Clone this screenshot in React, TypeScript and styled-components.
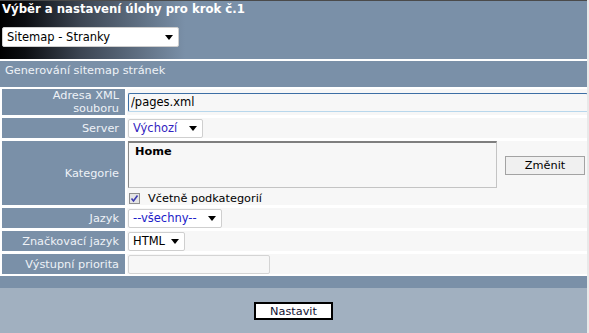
import React from 'react';
import styled, { createGlobalStyle } from 'styled-components';

const GlobalStyle = createGlobalStyle`
    html, body {
        margin: 0;
        padding: 0;
        background: #e9e9e9;
    }
    body {
        font-family: "DejaVu Sans", Verdana, sans-serif;
        font-size: 11px;
    }
`;

const Page = styled.div`
    width: 587px;
    height: 333px;
    background: #ffffff;
    display: flex;
    flex-direction: column;
    overflow: hidden;
`;

const Header = styled.div`
    border-top: 1px solid #4a4a4a;
    background: linear-gradient(to right, #000000 0px, #0c0e12 25px, #3c4552 80px, #7a90a8 185px, #7a90a8 100%);
    padding: 1px 2px 0;
    box-sizing: border-box;
    height: 59px;
`;

const Title = styled.div`
    color: #ffffff;
    font-weight: bold;
    font-size: 11.7px;
    line-height: 14px;
`;

const SelectWrap = styled.span<{ width: number }>`
    position: relative;
    display: inline-block;
    width: ${({ width }) => width}px;

    // arrow of the select
    &::after {
        content: '';
        position: absolute;
        right: 6px;
        top: 50%;
        margin-top: -2px;
        border-left: 4px solid transparent;
        border-right: 4px solid transparent;
        border-top: 5px solid #000;
        pointer-events: none;
    }
`;

const Select = styled.select<{ tone?: string; h?: number }>`
    appearance: none;
    width: 100%;
    height: ${({ h }) => h || 19}px;
    box-sizing: border-box;
    border: 1px solid #cfcfcf;
    border-radius: 2px;
    background: #ffffff;
    color: ${({ tone }) => tone || '#000'};
    font-family: "DejaVu Sans", Verdana, sans-serif;
    font-size: 11.5px;
    padding: 0 0 0 4px;
    margin: 0;
    outline: none;
`;

const HeaderSelect = styled(SelectWrap)`
    margin-top: 11px;
`;

const Section = styled.div`
    margin-top: 2px;
    height: 26px;
    background: #7a90a8;
    color: #eef2f7;
    padding: 3px 5px;
    box-sizing: border-box;
    font-size: 11.3px;
`;

const FormTable = styled.table`
    border-collapse: separate;
    border-spacing: 2px 3px;
    table-layout: fixed;
    width: 589px;
    margin-top: -1px;
`;

const Label = styled.td`
    width: 123px;
    box-sizing: border-box;
    background: #7a90a8;
    color: #eef2f7;
    text-align: right;
    padding: 0 6px 0 0;
    line-height: 13px;
    font-size: 11.3px;
    vertical-align: middle;
`;

const Value = styled.td<{ h: number }>`
    background: #f7f7f7;
    height: ${({ h }) => h}px;
    padding: 0 0 0 1px;
    vertical-align: middle;
    overflow: visible;
    white-space: nowrap;
`;

const TextInput = styled.input<{ width: number; focused?: boolean }>`
    box-sizing: border-box;
    width: ${({ width }) => width}px;
    height: 19px;
    border: 1px solid #cdcdcd;
    border-color: ${({ focused }) => focused ? '#3d6fa5 #b8d7ec #b8d7ec #3d6fa5' : '#d4d4d4'};
    border-radius: 2px;
    background: #f7f7f7;
    font-family: "DejaVu Sans", Verdana, sans-serif;
    font-size: 11.5px;
    color: #000;
    padding: 0 2px;
    margin: 0;
    outline: none;
`;

const KategorieBox = styled.div`
    display: flex;
    align-items: center;
    gap: 8px;
`;

const Listing = styled.div`
    width: 369px;
    height: 47px;
    flex-shrink: 0;
    box-sizing: border-box;
    border: 1px solid #c4c4c4;
    border-top: 2px solid #7f7f7f;
    border-left-color: #8a8a8a;
    padding: 2px 6px;
    font-weight: bold;
    font-size: 11.3px;
    background: #f7f7f7;
`;

const Button = styled.button`
    width: 80px;
    height: 19px;
    flex-shrink: 0;
    border: 1px solid #a3a3a3;
    background: #f0f0f0;
    font-family: "DejaVu Sans", Verdana, sans-serif;
    font-size: 11.3px;
    color: #000;
    padding: 0;
    margin-top: 2px;
`;

const CheckRow = styled.label`
    display: flex;
    align-items: center;
    gap: 8px;
    margin-top: 4px;
    color: #000;
    font-size: 11.3px;
`;

const Check = styled.span`
    width: 11px;
    height: 11px;
    box-sizing: border-box;
    border: 1px solid #8f8f8f;
    background: #e4e4e4;
    display: inline-flex;
    align-items: center;
    justify-content: center;
    margin-left: 1px;
`;

const BarDark = styled.div`
    height: 12px;
    background: #7a90a8;
    margin-top: -1px;
`;

const Footer = styled.div`
    flex: 1;
    background: #a1b0c0;
    display: flex;
    justify-content: center;
    padding-top: 14px;
`;

const SubmitButton = styled.button`
    width: 79px;
    height: 18px;
    box-sizing: border-box;
    border: 2px solid #000;
    background: #ffffff;
    color: #101030;
    font-family: "DejaVu Sans", Verdana, sans-serif;
    font-size: 11.3px;
    padding: 0;
`;

const App = () => {
    return (
        <Page>
            <GlobalStyle />
            <Header>
                <Title>Výběr a nastavení úlohy pro krok č.1</Title>
                <HeaderSelect width={177}>
                    <Select defaultValue="sitemap" h={20}>
                        <option value="sitemap">Sitemap - Stranky</option>
                    </Select>
                </HeaderSelect>
            </Header>
            <Section>Generování sitemap stránek</Section>
            <FormTable>
                <tbody>
                    <tr>
                        <Label>Adresa XML<br />souboru</Label>
                        <Value h={24}>
                            <TextInput width={460} focused defaultValue="/pages.xml" />
                        </Value>
                    </tr>
                    <tr>
                        <Label>Server</Label>
                        <Value h={20}>
                            <SelectWrap width={75}>
                                <Select tone="#3324c0" defaultValue="def">
                                    <option value="def">Výchozí</option>
                                </Select>
                            </SelectWrap>
                        </Value>
                    </tr>
                    <tr>
                        <Label>Kategorie</Label>
                        <Value h={62}>
                            <KategorieBox>
                                <Listing>Home</Listing>
                                <Button>Změnit</Button>
                            </KategorieBox>
                            <CheckRow>
                                <Check>
                                    <svg width="9" height="9" viewBox="0 0 9 9">
                                        <path d="M1.5 4.5 L3.5 7 L7.5 1.5" fill="none" stroke="#3b3bb0" strokeWidth="1.6" />
                                    </svg>
                                </Check>
                                Včetně podkategorií
                            </CheckRow>
                        </Value>
                    </tr>
                    <tr>
                        <Label>Jazyk</Label>
                        <Value h={20}>
                            <SelectWrap width={94}>
                                <Select tone="#2020c8" defaultValue="all">
                                    <option value="all">--všechny--</option>
                                </Select>
                            </SelectWrap>
                        </Value>
                    </tr>
                    <tr>
                        <Label>Značkovací jazyk</Label>
                        <Value h={20}>
                            <SelectWrap width={57}>
                                <Select defaultValue="html">
                                    <option value="html">HTML</option>
                                </Select>
                            </SelectWrap>
                        </Value>
                    </tr>
                    <tr>
                        <Label>Výstupní priorita</Label>
                        <Value h={20}>
                            <TextInput width={142} />
                        </Value>
                    </tr>
                </tbody>
            </FormTable>
            <BarDark />
            <Footer>
                <SubmitButton>Nastavit</SubmitButton>
            </Footer>
        </Page>
    );
};

export default App;
